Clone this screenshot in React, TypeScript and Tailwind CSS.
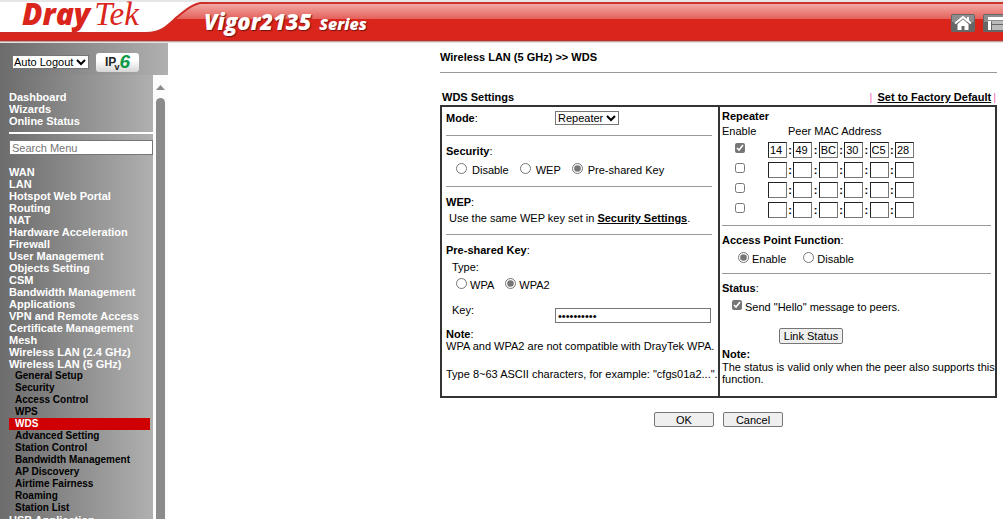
import { type ReactNode } from "react";

const topMenu = ["Dashboard", "Wizards", "Online Status"];

const mainMenu = [
  "WAN",
  "LAN",
  "Hotspot Web Portal",
  "Routing",
  "NAT",
  "Hardware Acceleration",
  "Firewall",
  "User Management",
  "Objects Setting",
  "CSM",
  "Bandwidth Management",
  "Applications",
  "VPN and Remote Access",
  "Certificate Management",
  "Mesh",
  "Wireless LAN (2.4 GHz)",
  "Wireless LAN (5 GHz)",
];

const wlanMenu = [
  "General Setup",
  "Security",
  "Access Control",
  "WPS",
  "WDS",
  "Advanced Setting",
  "Station Control",
  "Bandwidth Management",
  "AP Discovery",
  "Airtime Fairness",
  "Roaming",
  "Station List",
];

const peers = [
  { enabled: true, mac: ["14", "49", "BC", "30", "C5", "28"] },
  { enabled: false, mac: ["", "", "", "", "", ""] },
  { enabled: false, mac: ["", "", "", "", "", ""] },
  { enabled: false, mac: ["", "", "", "", "", ""] },
];

function Header() {
  return (
    <header className="relative flex h-[43px] shrink-0 border-t-2 border-[#e6e6e6]">
      <svg className="absolute inset-0 h-[41px] w-full" aria-hidden="true">
        <defs>
          <linearGradient id="gloss" x1="0" y1="0" x2="0" y2="1">
            <stop offset="0" stopColor="#f2a9a5" />
            <stop offset="1" stopColor="#e4605a" />
          </linearGradient>
        </defs>
        <rect width="100%" height="41" fill="#da251c" />
        <rect y="2" width="100%" height="15" fill="url(#gloss)" />
        <rect width="100%" height="2" fill="#c9352f" />
        <rect y="38" width="100%" height="1" fill="#b3352f" />
        <rect y="39" width="100%" height="1" fill="#d09a96" />
        <rect y="40" width="100%" height="1" fill="#e4e4e4" />
        <path
          d="M0 0H207C192 1 186 8 177 15C166 25 161 31 146 31H0Z"
          fill="#fff"
        />
        <path
          d="M207 0C192 1 186 8 177 15C166 25 161 31 146 31H0"
          fill="none"
          stroke="#cf2b24"
          strokeWidth="2"
        />
      </svg>
      <div className="relative flex grow items-center">
        <a
          href="#home"
          className="flex h-[34px] w-[204px] items-baseline self-start pl-[22px] leading-6 text-[#da251c]"
        >
          <span className="font-['Open_Sans',sans-serif] text-[30px] leading-6 font-extrabold italic">
            Dray
          </span>
          <span className="ml-1 font-['Liberation_Serif',serif] text-[33px] leading-6 italic">
            Tek
          </span>
        </a>
        <h1 className="flex items-baseline gap-2 font-['Open_Sans',sans-serif] font-extrabold text-white italic [text-shadow:1px_1px_1px_#701510]">
          <span className="text-[22px]">Vigor2135</span>
          <span className="text-[16px]">Series</span>
        </h1>
        <button aria-label="Home" className="ml-auto">
          <svg width="24" height="18" viewBox="0 0 24 18">
            <rect width="24" height="18" rx="2" fill="#666" />
            <rect x="1" y="1" width="22" height="7" fill="#8d8d8d" />
            <path
              d="M4 9.500 12 3l8 6.500M17 3v4"
              fill="none"
              stroke="#fff"
              strokeWidth="2"
            />
            <path d="M6.500 10 12 5.500 17.500 10v6h-4v-4h-3v4h-4Z" fill="#fff" />
          </svg>
        </button>
        <div className="ml-2 w-5 overflow-hidden">
          <button aria-label="Layout" className="block w-6">
            <svg width="24" height="18" viewBox="0 0 24 18">
              <rect width="24" height="18" rx="2" fill="#666" />
              <rect x="1" y="1" width="22" height="7" fill="#8d8d8d" />
              <path d="M5 3h19v3H5zM5 7h3v9H5z" fill="#fff" />
              <path d="M9 7h14v3H9zM9 11h14v5H9z" fill="#bbb" />
            </svg>
          </button>
        </div>
      </div>
    </header>
  );
}

function Select({
  id,
  label,
  value,
  className,
}: {
  id: string;
  label?: string;
  value: string;
  className: string;
}) {
  return (
    <div className="relative flex">
      <select
        id={id}
        aria-label={label}
        className={`appearance-none border border-[#767676] bg-white ${className}`}
      >
        <option>{value}</option>
      </select>
      <svg
        className="pointer-events-none absolute top-1 right-[3px]"
        width="10"
        height="7"
        viewBox="0 0 10 7"
        aria-hidden="true"
      >
        <path d="M1 1l4 4 4-4" fill="none" stroke="#000" strokeWidth="2" />
      </svg>
    </div>
  );
}

function MenuLink({ children }: { children: ReactNode }) {
  return (
    <li>
      <a href="#menu" className="text-white">
        {children}
      </a>
    </li>
  );
}

function Sidebar() {
  return (
    <aside className="flex w-[168px] shrink-0 flex-col overflow-hidden">
      <div className="flex h-8 shrink-0 items-center gap-[7px] bg-linear-to-r from-[#6c6c6c] to-[#b0b0b0] pt-1.5 pl-3">
        <Select
          id="logout"
          label="Auto Logout"
          value="Auto Logout"
          className="h-[14px] w-[77px] pl-px"
        />
        <button
          aria-label="IPv6"
          className="flex h-[19px] w-[43px] items-center justify-center rounded-[3px] bg-linear-to-b from-white from-40% to-[#d5d5d5]"
        >
          <span className="text-[12px] font-bold text-[#222]">IP</span>
          <span className="-ml-0.5 self-end text-[9px] leading-[10px] font-bold text-[#222]">
            v
          </span>
          <span className="text-[19px] leading-[18px] font-bold text-[#0a9a48] italic">
            6
          </span>
        </button>
      </div>
      <div className="flex min-h-0 grow">
        <nav className="min-w-0 grow overflow-hidden bg-linear-to-r from-[#6c6c6c] to-[#b0b0b0] pt-4 pl-[9px] font-bold">
          <ul>
            {topMenu.map((item) => (
              <MenuLink key={item}>{item}</MenuLink>
            ))}
          </ul>
          <hr className="mt-[5px] border-t-2 border-white" />
          <input
            aria-label="Search Menu"
            placeholder="Search Menu"
            className="mt-1.5 block h-[15px] w-full border border-[#767676] bg-white px-0.5 font-normal placeholder:text-[#757575]"
          />
          <ul className="mt-[11px]">
            {mainMenu.map((item) => (
              <MenuLink key={item}>{item}</MenuLink>
            ))}
          </ul>
          <ul className="mr-[3px] text-[10px]">
            {wlanMenu.map((item) => (
              <li key={item}>
                <a
                  href="#wlan"
                  className={`block pl-1.5 ${item === "WDS" ? "bg-[#d00000] text-white" : ""}`}
                >
                  {item}
                </a>
              </li>
            ))}
          </ul>
          <ul>
            <MenuLink>USB Application</MenuLink>
          </ul>
        </nav>
        <div className="flex w-[15px] shrink-0 flex-col items-center bg-[#fcfcfc] pt-2.5">
          <svg width="9" height="5" viewBox="0 0 9 5" aria-hidden="true">
            <path d="M4.500 0 9 5H0Z" fill="#8b8b8b" />
          </svg>
          <div className="mt-2 w-[9px] grow rounded-t-full bg-[#8b8b8b]" />
        </div>
      </div>
    </aside>
  );
}

function Radio({
  name,
  label,
  checked,
  className = "gap-[5px]",
}: {
  name: string;
  label: string;
  checked?: boolean;
  className?: string;
}) {
  return (
    <label className={`flex ${className}`}>
      <input
        type="radio"
        name={name}
        defaultChecked={checked}
        className="mt-px size-[11px] accent-[#767676]"
      />
      <span className="pt-0.5">{label}</span>
    </label>
  );
}

function Rule({ className }: { className: string }) {
  return <hr className={`border-t border-[#999] ${className}`} />;
}

function ModeCell() {
  return (
    <div className="border-r-2 border-[#333] pr-1.5 pb-4 pl-1">
      <div className="flex h-[22px] items-center">
        <label htmlFor="mode" className="w-[109px]">
          <b>Mode</b>:
        </label>
        <Select id="mode" value="Repeater" className="h-[14px] w-16 pl-0.5" />
      </div>
      <Rule className="mt-1.5" />
      <p className="mt-[9px]">
        <b>Security</b>:
      </p>
      <div className="mt-[5px] flex h-4 gap-[11px] pl-2.5">
        <Radio name="security" label="Disable" />
        <Radio name="security" label="WEP" />
        <Radio name="security" label="Pre-shared Key" checked />
      </div>
      <Rule className="mt-2" />
      <p className="mt-[9px]">
        <b>WEP</b>:
      </p>
      <p className="mt-1 pl-[3px]">
        Use the same WEP key set in{" "}
        <a href="#security" className="font-bold underline">
          Security Settings
        </a>
        .
      </p>
      <Rule className="mt-2.5" />
      <p className="mt-[9px]">
        <b>Pre-shared Key</b>:
      </p>
      <p className="mt-[5px] pl-1.5">Type:</p>
      <div className="mt-1 flex h-4 gap-[11px] pl-2.5">
        <Radio name="type" label="WPA" className="gap-[3px]" />
        <Radio name="type" label="WPA2" checked className="gap-[3px]" />
      </div>
      <div className="mt-2.5 flex h-5 items-start">
        <label htmlFor="key" className="w-[109px] pt-px pl-1.5">
          Key:
        </label>
        <input
          id="key"
          type="password"
          defaultValue="cfgs01a2xx"
          className="h-[15px] w-[156px] self-end border border-[#767676] px-0.5"
        />
      </div>
      <p className="mt-[5px]">
        <b>Note</b>:
      </p>
      <p className="whitespace-nowrap">
        WPA and WPA2 are not compatible with DrayTek WPA.
      </p>
      <p className="mt-4 whitespace-nowrap">
        Type 8~63 ASCII characters, for example: "cfgs01a2...".
      </p>
    </div>
  );
}

function PeerTable() {
  return (
    <table className="mt-[3px]">
      <thead>
        <tr className="align-top">
          <th className="h-[17px] w-[46px] text-left font-normal">Enable</th>
          <th className="pl-5 text-left font-normal">Peer MAC Address</th>
        </tr>
      </thead>
      <tbody>
        {peers.map((peer, row) => (
          <tr key={row} className="align-top">
            <td>
              <input
                type="checkbox"
                aria-label={`Enable peer ${row + 1}`}
                defaultChecked={peer.enabled}
                className="mt-px ml-[13px] block size-[10px] accent-[#767676]"
              />
            </td>
            <td className="h-5">
              <div className="flex w-[146px] justify-between">
                {peer.mac.map((part, i) => (
                  <div key={i} className="contents">
                    {i > 0 && <b className="pt-0.5">:</b>}
                    <input
                      aria-label={`Peer ${row + 1} MAC byte ${i + 1}`}
                      defaultValue={part}
                      maxLength={2}
                      className="h-4 w-[19px] border border-t-[#222] border-r-[#767676] border-b-[#767676] border-l-[#222] px-px"
                    />
                  </div>
                ))}
              </div>
            </td>
          </tr>
        ))}
      </tbody>
    </table>
  );
}

function RepeaterCell() {
  return (
    <div className="pt-[3px] pr-1 pl-0.5">
      <h2 className="font-bold">Repeater</h2>
      <PeerTable />
      <Rule className="mt-[3px]" />
      <p className="mt-2">
        <b>Access Point Function</b>:
      </p>
      <div className="mt-[5px] flex h-4 gap-[17px] pl-4">
        <Radio name="ap" label="Enable" checked className="gap-[3px]" />
        <Radio name="ap" label="Disable" className="gap-[3px]" />
      </div>
      <Rule className="mt-1.5" />
      <p className="mt-2">
        <b>Status</b>:
      </p>
      <label className="mt-1.5 flex h-[14px] gap-[3px] pl-2.5">
        <input
          type="checkbox"
          defaultChecked
          className="size-[10px] accent-[#767676]"
        />
        <span className="pt-px">Send "Hello" message to peers.</span>
      </label>
      <button className="mt-[14px] ml-[57px] block h-4 w-16 rounded-[2px] border border-[#767676] bg-[#efefef]">
        Link Status
      </button>
      <h3 className="mt-1 font-bold">Note:</h3>
      <p className="mt-px whitespace-nowrap">
        The status is valid only when the peer also supports this
        <br />
        function.
      </p>
    </div>
  );
}

export default function App() {
  return (
    <div className="flex h-screen flex-col overflow-hidden bg-white font-['Liberation_Sans',Arial,sans-serif] text-[11px] leading-3 text-black">
      <Header />
      <div className="flex min-h-0 grow">
        <Sidebar />
        <main className="grow overflow-hidden pt-2 pr-1.5 pl-[272px]">
          <p className="font-bold">Wireless LAN (5 GHz) &gt;&gt; WDS</p>
          <Rule className="mt-[9px]" />
          <div className="mt-[18px] flex justify-between pr-px pl-0.5 font-bold">
            <h2>WDS Settings</h2>
            <div className="flex">
              <span className="font-normal text-[#f06ab0]">|</span>
              <a href="#default" className="mr-0.5 ml-[5px] underline">
                Set to Factory Default
              </a>
              <span className="font-normal text-[#f06ab0]">|</span>
            </div>
          </div>
          <form onSubmit={(e) => e.preventDefault()}>
            <div className="mt-0.5 grid grid-cols-[minmax(0,1fr)_275px] border-2 border-[#333]">
              <ModeCell />
              <RepeaterCell />
            </div>
            <div className="mt-[14px] flex justify-center gap-[9px]">
              <button className="h-[15px] w-[60px] rounded-[2px] border border-[#767676] bg-[#efefef]">
                OK
              </button>
              <button className="h-[15px] w-[60px] rounded-[2px] border border-[#767676] bg-[#efefef]">
                Cancel
              </button>
            </div>
          </form>
        </main>
      </div>
    </div>
  );
}
